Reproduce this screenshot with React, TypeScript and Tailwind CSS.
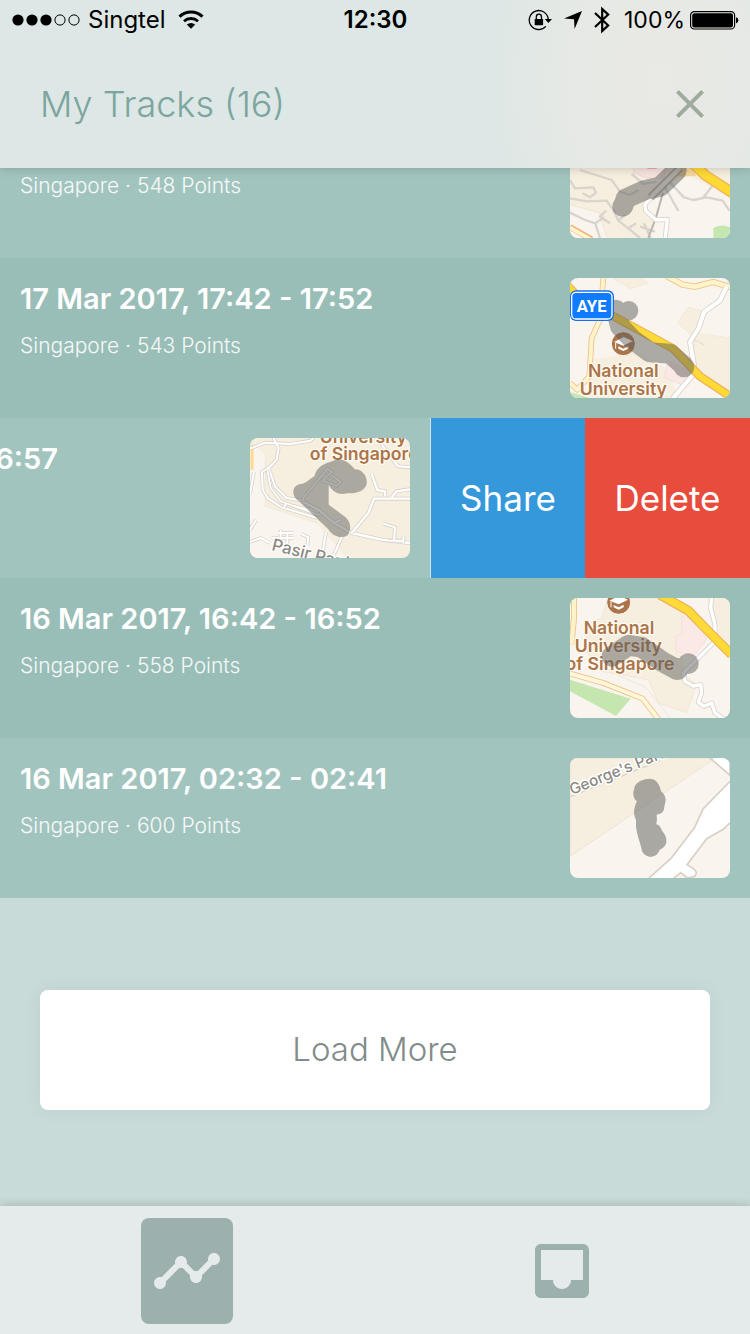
import type { ReactNode } from "react";
import { MdClose, MdInbox, MdTimeline } from "react-icons/md";

const LAND = "#f9f4ed";
const CAMPUS = "#f6eede";
const LABEL = "#ab7549";
const TRACK = "#5a5b59";

function Road({ d, color = "#ffffff", edge = "#d8d2cb", width = 9 }: { d: string; color?: string; edge?: string; width?: number }) {
  return (
    <g fill="none" strokeLinejoin="round">
      <path d={d} stroke={edge} strokeWidth={width + 5} />
      <path d={d} stroke={color} strokeWidth={width} />
    </g>
  );
}

function Track({ d, width = 66, children }: { d: string; width?: number; children?: ReactNode }) {
  return (
    <g opacity="0.48" fill={TRACK}>
      <path d={d} fill="none" stroke={TRACK} strokeWidth={width} strokeLinecap="round" strokeLinejoin="round" />
      {children}
    </g>
  );
}

function PlaceLabel({ x, y, anchor = "middle", children }: { x: number; y: number; anchor?: "start" | "middle"; children: string }) {
  return (
    <text x={x} y={y} fontSize="53" fontWeight="600" textAnchor={anchor} fill={LABEL} stroke="#fffaf2" strokeWidth="8" strokeLinejoin="round" paintOrder="stroke">
      {children}
    </text>
  );
}

function CampusPin({ x, y }: { x: number; y: number }) {
  return (
    <g transform={`translate(${x} ${y})`}>
      <circle r="36" fill={LABEL} stroke="#fffaf2" strokeWidth="3" />
      <path d="M-28 -5 L1 -20 L28 -8 L0 6 Z" fill="#fff" />
      <path d="M-15 8 L0 15 L15 7 V15 L0 22 L-15 15 Z" fill="#fff" />
      <path d="M-23 -2 V15" stroke="#fff" strokeWidth="3" />
    </g>
  );
}

function MapFrame({ viewBox, children }: { viewBox: string; children: ReactNode }) {
  return (
    <svg viewBox={viewBox} className="h-[120px] w-40 shrink-0 rounded-lg font-['Inter',sans-serif]" aria-hidden="true">
      {children}
    </svg>
  );
}

function MapOne() {
  return (
    <MapFrame viewBox="30 -126 480 360">
      <rect x="30" y="-126" width="480" height="360" fill={CAMPUS} />
      <path d="M385 45 L510 115 V234 H262 L285 180 L250 130 L275 100 Z" fill={LAND} />
      <path d="M30 135 L118 158 L140 234 H30 Z" fill={LAND} />
      <path d="M30 135 L118 158 L138 225" fill="none" stroke="#efe3d2" strokeWidth="2" />
      <path d="M215 10 H325 L310 55 L260 55 L222 38 Z" fill="#f4e2dd" stroke="#ecd0cf" strokeWidth="2" />
      <path d="M262 24 H290" stroke="#f08e93" strokeWidth="5" />
      <path d="M345 20 L400 15 L408 48 L350 50 Z" fill="#f4d69b" />
      <g fill="none" stroke="#d9d4cd" strokeWidth="7" strokeLinejoin="round">
        <path d="M30 60 L45 85 L100 82 L108 98 L90 112 L68 100" />
        <path d="M60 30 L155 60 L180 95 L210 105 L235 90" />
        <path d="M30 115 L82 124 L140 122 L160 150 L175 182 L205 205 L228 190" />
        <path d="M138 152 L120 170 L150 190 M175 182 L195 165 M205 205 L240 234 M240 200 L285 215 M252 190 L272 234" />
        <path d="M30 158 L75 180 L106 190 L120 234 M106 190 L132 172" />
        <path d="M310 72 L355 153 M330 68 L372 112 L400 120 L440 112 L488 122 L508 152" />
        <path d="M430 112 L470 62" />
        <path d="M215 42 L250 72 L290 65" />
      </g>
      <path d="M309 98 L288 172 L265 234" fill="none" stroke="#bab5ae" strokeWidth="6" />
      <path d="M385 -4 L435 45 L520 100" fill="none" stroke="#eeb25e" strokeWidth="33" />
      <path d="M385 -4 L435 45 L520 100" fill="none" stroke="#fdd934" strokeWidth="25" />
      <path d="M30 201 L95 238" stroke="#efb476" strokeWidth="17" />
      <path d="M30 203 L95 240" stroke="#fff6cf" strokeWidth="11" />
      <Road d="M275 112 L255 132 L257 152 L288 180 L322 178 L315 240" width={10} />
      <path d="M460 204 Q482 190 510 202 V234 H460 Z" fill="#c5e6ae" />
      <Track d="M190 138 L197 116 L255 90 L300 80 L350 32" width={60}>
        <circle cx="187" cy="140" r="30" />
      </Track>
      <path d="M272 112 L360 24" stroke="#777471" strokeWidth="24" opacity=".6" />
      <path d="M272 112 L360 24" stroke="#aaa7a3" strokeWidth="13" />
    </MapFrame>
  );
}

function MapTwo() {
  return (
    <MapFrame viewBox="30 30 480 360">
      <rect x="30" y="30" width="480" height="360" fill={LAND} />
      <path d="M158 30 H245 L265 46 L212 62 Z" fill={CAMPUS} stroke="#efe6d6" strokeWidth="2" />
      <path d="M385 118 L430 130 L408 195 L510 210 V390 L390 300 L405 210 L352 164 Z" fill={CAMPUS} stroke="#efe6d6" strokeWidth="2" />
      <path d="M95 275 L230 255 L320 300 L355 390 H90 Z" fill={CAMPUS} />
      <path d="M322 278 L400 315 L365 350 L314 330 Z" fill="#fae8e5" stroke="#f2d9d7" strokeWidth="2" />
      <Road d="M130 30 L120 155 L95 210 L88 325 L52 365 L30 345" color="#fff4c9" edge="#eec08d" width={12} />
      <Road d="M320 24 L368 50 L405 56 L460 42 L512 58" color="#fff4c9" edge="#eec08d" width={14} />
      <Road d="M500 55 L480 98 L432 132 L416 180 L390 222 L402 290 L395 325 L338 392" color="#ffffff" width={12} />
      <path d="M402 215 L432 230" stroke="#d8d2cb" strokeWidth="2" />
      <path d="M20 50 L60 92 L170 150 L340 242 L420 325 L515 388" fill="none" stroke="#edb15d" strokeWidth="26" />
      <path d="M20 50 L60 92 L170 150 L340 242 L420 325 L515 388" fill="none" stroke="#fdda35" strokeWidth="19" />
      <path d="M30 372 L90 390 H30 Z" fill="#c5e6ae" />
      <CampusPin x={190} y={227} />
      <Track d="M168 125 L180 175 L218 215 L270 253 L330 257 L370 292" width={60}>
        <circle cx="206" cy="128" r="29" />
        <circle cx="372" cy="297" r="31" />
      </Track>
      <PlaceLabel x={190} y={326}>National</PlaceLabel>
      <PlaceLabel x={190} y={380}>University</PlaceLabel>
      <rect x="30" y="67" width="132" height="92" rx="18" fill="#1670ee" />
      <rect x="35" y="73" width="121" height="80" rx="13" fill="#117bff" stroke="#fff" strokeWidth="4" />
      <text x="95" y="132" fontSize="50" fontWeight="700" textAnchor="middle" fill="#fff" className="font-['Roboto',sans-serif]">AYE</text>
    </MapFrame>
  );
}

function MapThree() {
  return (
    <MapFrame viewBox="30 30 480 360">
      <rect x="30" y="30" width="480" height="360" fill={CAMPUS} />
      <path d="M30 60 L55 60 L76 82 V235 L230 285 L320 390 H30 Z" fill={LAND} />
      <path d="M76 82 V235 L230 285" fill="none" stroke="#efe6d6" strokeWidth="2" />
      <path d="M36 50 V125" stroke="#ffd98c" strokeWidth="9" />
      <Road d="M30 62 L75 44 L150 48 L212 38 L220 30 M100 30 L116 60 L110 95 L86 120 L105 175 L140 210 L190 218 M92 115 L66 132 L68 185 L85 212 L125 238 L232 270" width={6} />
      <Road d="M82 124 L92 180 L122 220 L155 232 L240 252 M132 238 L138 226 L240 262" width={5} />
      <Road d="M190 222 L235 245 L282 285 L335 315 L425 335 L510 345 M282 285 L302 276" width={7} />
      <Road d="M335 315 L385 255 L402 212 H510 M435 205 V190 L412 186 L395 138 M455 208 L470 190 L510 184" width={7} />
      <Road d="M190 220 V210 L262 122 L276 132 L248 158 L290 174 L302 162 L275 142" width={5} />
      <Road d="M430 287 L465 298 L462 340 M445 338 H490 M490 325 V345" width={6} />
      <Road d="M30 198 L42 132 M30 305 L48 276 M30 342 L62 330 L90 345 M95 330 H160 M122 305 V345 M116 315 H160 M142 315 V350 M185 318 L205 328 L202 352 M245 390 L258 312 M278 390 L308 320" width={6} />
      <Road d="M420 42 L448 82 L475 115 L510 118" width={6} />
      <PlaceLabel x={370} y={44}>University</PlaceLabel>
      <PlaceLabel x={209} y={96} anchor="start">of Singapore</PlaceLabel>
      <path d="M223 145 C231 112 258 106 278 99 C306 85 330 105 344 124 C370 124 385 150 379 172 C370 192 347 197 321 196 C300 202 277 193 266 170 V230 L316 267 C337 286 333 313 320 324 C300 333 276 323 265 304 L177 220 C155 207 152 175 181 168 C195 169 202 158 223 145 Z" fill={TRACK} opacity="0.48" />
      <text x="93" y="366" fontSize="50" fontWeight="500" fill="#8c8883" stroke="#fff" strokeWidth="7" paintOrder="stroke" transform="rotate(14 93 366)">Pasir Panjang</text>
    </MapFrame>
  );
}

function MapFour() {
  return (
    <MapFrame viewBox="30 30 480 360">
      <rect x="30" y="30" width="480" height="360" fill={LAND} />
      <path d="M145 30 H300 L385 78 L360 160 L370 260 L410 290 L380 374 L295 345 L265 275 L125 250 L70 180 L90 105 L125 90 Z" fill={CAMPUS} stroke="#eee2d0" strokeWidth="2" />
      <path d="M440 30 H510 V210 L465 170 L478 120 Z" fill={CAMPUS} />
      <path d="M365 84 L405 98 L440 155 L402 205 L347 188 V145 L365 135 Z" fill="#fbe9e6" stroke="#f4dada" strokeWidth="2" />
      <path d="M30 275 L212 332 L168 384 L30 310 Z" fill="#c5e6ae" />
      <path d="M170 260 L258 298 L330 390" fill="none" stroke="#e9e0d5" strokeWidth="2" />
      <Road d="M42 24 V90 L34 170" color="#fff4c9" edge="#eec08d" width={13} />
      <Road d="M24 255 L130 285 L248 332 L300 400" color="#fff7d7" edge="#eec08d" width={12} />
      <Road d="M455 25 L452 60 L465 110 L465 160 L370 255 L375 280 L400 294 L422 290 L425 315 L415 342 L432 355 L455 345 L465 375 L490 392" width={10} />
      <path d="M300 20 L385 68 L450 135 L515 200" fill="none" stroke="#edb15d" strokeWidth="29" />
      <path d="M300 20 L385 68 L450 135 L515 200" fill="none" stroke="#fdda35" strokeWidth="22" />
      <CampusPin x={176} y={43} />
      <PlaceLabel x={177} y={138}>National</PlaceLabel>
      <PlaceLabel x={175} y={192}>University</PlaceLabel>
      <PlaceLabel x={180} y={247}>of Singapore</PlaceLabel>
      <Track d="M156 205 L205 172 L245 178 L305 220 L342 240" width={62}>
        <circle cx="352" cy="243" r="33" />
        <circle cx="385" cy="227" r="31" />
      </Track>
    </MapFrame>
  );
}

function MapFive() {
  return (
    <MapFrame viewBox="30 30 480 360">
      <rect x="30" y="30" width="480" height="360" fill={LAND} />
      <path d="M30 30 H445 L455 38 L30 325 Z" fill={CAMPUS} stroke="#efe4d4" strokeWidth="3" />
      <path d="M30 147 L300 38" stroke="#dcd4c8" strokeWidth="4" />
      <path d="M450 30 L510 82 V24 Z" fill="#fff" stroke="#d9cfc2" strokeWidth="5" />
      <path d="M515 95 L430 182 L403 240 L332 332 L262 395 L340 392 L362 374 L382 390 L404 385 Q415 372 400 362 L381 350 L440 272 L490 244 L515 220 Z" fill="#fff" stroke="#d9cfc2" strokeWidth="5" strokeLinejoin="round" />
      <text x="36" y="141" fontSize="46" fontWeight="500" fill="#8c8883" stroke="#fff" strokeWidth="9" strokeLinejoin="round" paintOrder="stroke" transform="rotate(-22 36 141)">George's Park</text>
      <path d="M222 125 C224 98 255 93 270 92 C292 93 300 114 303 130 C321 145 318 160 313 174 C314 194 300 198 290 200 Q292 216 289 229 Q301 232 306 248 C322 266 328 292 299 305 C292 330 256 336 245 306 C244 292 231 266 228 235 V215 C220 204 220 180 231 160 C220 152 218 136 222 125 Z" fill={TRACK} opacity="0.5" />
    </MapFrame>
  );
}

function TrackContent({ title, points, map }: { title: string; points: number; map: ReactNode }) {
  return (
    <div className="flex w-full shrink-0 justify-between p-5 text-white">
      <div>
        <h2 className="text-[29px] leading-[42px] font-semibold whitespace-nowrap">{title}</h2>
        <p className="mt-3 text-[21px] leading-7 font-light text-white/90">Singapore · {points} Points</p>
      </div>
      {map}
    </div>
  );
}

function StatusBar() {
  return (
    <div className="grid h-10 grid-cols-3 items-center pr-[11px] pl-3 text-[24px] leading-10 text-black">
      <div className="flex items-center gap-2">
        <svg viewBox="0 0 68 12" className="h-3 w-[68px]" role="img" aria-label="Signal strength">
          <circle cx="6" cy="6" r="5.6" />
          <circle cx="20" cy="6" r="5.6" />
          <circle cx="34" cy="6" r="5.6" />
          <circle cx="48" cy="6" r="5.1" fill="none" stroke="#000" />
          <circle cx="62" cy="6" r="5.1" fill="none" stroke="#000" />
        </svg>
        <span>Singtel</span>
        <svg viewBox="0 0 26 20" className="ml-1 h-5 w-[26px]" role="img" aria-label="Wi-Fi">
          <path d="M1.5 6.6 C8 .4 18 .4 24.5 6.6" fill="none" stroke="#000" strokeWidth="3" />
          <path d="M6 11.2 C10 7.6 16 7.6 20 11.2" fill="none" stroke="#000" strokeWidth="2.8" />
          <path d="M8.8 14.6 Q13 11.4 17.2 14.6 L13 18.7 Z" />
        </svg>
      </div>
      <div className="text-center font-semibold">12:30</div>
      <div className="flex items-center justify-end text-[23px]">
        <svg viewBox="0 0 24 22" className="h-[22px] w-6" role="img" aria-label="Rotation lock">
          <path d="M20.2 10 A9.5 9.5 0 1 0 17.8 17.4" fill="none" stroke="#000" strokeWidth="1.3" />
          <path d="M16.8 10 H24 L20.4 14 Z" />
          <rect x="6.7" y="10" width="8.4" height="6.2" rx=".6" />
          <path d="M8.3 10.4 V8 a2.6 2.8 0 0 1 5.2 0 V10.4" fill="none" stroke="#000" strokeWidth="1.3" />
        </svg>
        <svg viewBox="0 0 18 18" className="ml-3 h-[18px] w-[18px]" role="img" aria-label="Location">
          <path d="M0 7.4 L18 0 L10.6 18 L10 8.2 Z" />
        </svg>
        <svg viewBox="0 0 16 28" className="ml-3 h-7 w-4" role="img" aria-label="Bluetooth">
          <path d="M1 7 L14.2 19.4 L8.2 25 V3 L14.2 8.6 L1 21" fill="none" stroke="#000" strokeWidth="2.2" />
        </svg>
        <span className="ml-[14px]">100%</span>
        <svg viewBox="0 0 50 20" className="ml-1 h-5 w-[50px]" role="img" aria-label="Battery full">
          <rect x="1.6" y="1.6" width="44" height="17.4" rx="3.6" fill="none" stroke="#000" strokeWidth="1.2" />
          <rect x="3.2" y="3.2" width="40.8" height="14.2" rx="2.2" />
          <path d="M47 7.2 q2.4 .5 2.4 3.1 t-2.4 3.1 Z" />
        </svg>
      </div>
    </div>
  );
}

export default function App() {
  return (
    <div className="flex h-screen flex-col overflow-hidden bg-[#c8dbd8] font-['Inter',sans-serif]">
      <header className="z-10 shrink-0 bg-[#dde7e5] bg-[radial-gradient(ellipse_24%_150%_at_88%_50%,#e9e9e5_0%,#e6e9e5_50%,#dde7e5_100%)] shadow-[0_0_10px_rgba(0,0,0,0.2)]">
        <StatusBar />
        <div className="flex h-32 items-center justify-between pr-9 pl-10">
          <h1 className="text-[36px] leading-[48px] font-light text-[#7ba59e]">My Tracks (16)</h1>
          <button type="button" aria-label="Close" className="text-[#9fab9c]">
            <MdClose size={48} />
          </button>
        </div>
      </header>

      <main className="flex min-h-0 flex-1 flex-col justify-end overflow-hidden">
        <ul className="shrink-0">
          <li className="flex bg-[#a2c4be]">
            <TrackContent title="17 Mar 2017, 18:12 - 18:22" points={548} map={<MapOne />} />
          </li>
          <li className="flex bg-[#99beb7]">
            <TrackContent title="17 Mar 2017, 17:42 - 17:52" points={543} map={<MapTwo />} />
          </li>
          <li className="flex justify-end overflow-hidden bg-[#a2c4be]">
            <TrackContent title="16 Mar 2017, 16:47 - 16:57" points={551} map={<MapThree />} />
            <div className="flex shrink-0 border-l border-[#d5e2e2] text-[35px] text-white">
              <button type="button" className="w-[154px] bg-[#3498db]">Share</button>
              <button type="button" className="w-[165px] bg-[#e74c3c]">Delete</button>
            </div>
          </li>
          <li className="flex bg-[#99beb7]">
            <TrackContent title="16 Mar 2017, 16:42 - 16:52" points={558} map={<MapFour />} />
          </li>
          <li className="flex bg-[#a2c4be]">
            <TrackContent title="16 Mar 2017, 02:32 - 02:41" points={600} map={<MapFive />} />
          </li>
        </ul>
        <div className="shrink-0 px-10 pt-[92px] pb-24">
          <button type="button" className="h-[120px] w-full rounded-lg bg-white text-[33px] font-light text-[#7f8c8a] shadow-[0_0_20px_rgba(0,0,0,0.05)]">
            Load More
          </button>
        </div>
      </main>

      <nav className="z-10 flex h-32 shrink-0 items-center bg-[#e5ebea] pt-0.5 pr-px text-[#9cb1ad] shadow-[0_0_10px_rgba(0,0,0,0.2)]">
        <div className="flex flex-1 justify-center">
          <button type="button" aria-label="Tracks" aria-pressed="true" className="flex h-[106px] w-[92px] items-center justify-center rounded-lg bg-[#9cb1ad] text-[#e5ebea]">
            <MdTimeline size={72} />
          </button>
        </div>
        <div className="flex flex-1 justify-center">
          <button type="button" aria-label="Inbox" aria-pressed="false" className="flex h-[106px] w-[92px] items-center justify-center rounded-lg">
            <MdInbox size={72} />
          </button>
        </div>
      </nav>
    </div>
  );
}
